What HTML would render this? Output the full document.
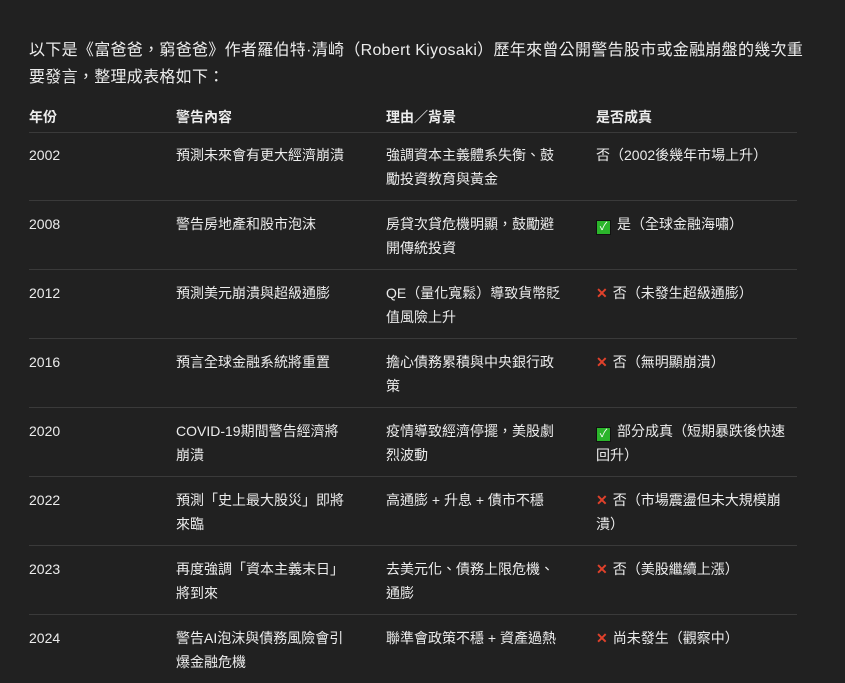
<!DOCTYPE html>
<html><head><meta charset="utf-8"><style>
body{margin:0;background:#212121;color:#ececec;font-family:"Liberation Sans","Noto Sans CJK TC",sans-serif;width:845px;height:681px;overflow:hidden;position:relative}
p{position:absolute;left:29px;top:37px;width:780px;margin:0;font-size:16px;line-height:27px;letter-spacing:0.3px}
.r{position:absolute;left:29px;width:768px;border-bottom:1px solid #3a3a3a;font-size:14px;line-height:24px}
.r div{position:absolute;top:11px}
.a{left:0}.b{left:147px;width:176px}.c{left:357px;width:177px}.d{left:567px;width:196px}
.h{font-weight:bold}
.ck{display:inline-block;width:13px;height:13px;background:#2bb52b;border:1px solid #111;color:#fff;font-size:11px;line-height:13px;text-align:center;vertical-align:-1px;margin-right:6px}
.x{color:#e0412b;font-weight:bold;margin-right:5px}
</style></head><body>
<p>以下是《富爸爸，窮爸爸》作者羅伯特·清崎（Robert Kiyosaki）歷年來曾公開警告股市或金融崩盤的幾次重要發言，整理成表格如下：</p>
<div class="r h" style="top:93px;height:39px"><div class="a" style="top:12px">年份</div><div class="b" style="top:12px">警告內容</div><div class="c" style="top:12px">理由／背景</div><div class="d" style="top:12px">是否成真</div></div>
<div class="r" style="top:132px;height:68px"><div class="a">2002</div><div class="b">預測未來會有更大經濟崩潰</div><div class="c">強調資本主義體系失衡、鼓勵投資教育與黃金</div><div class="d">否（2002後幾年市場上升）</div></div>
<div class="r" style="top:201px;height:68px"><div class="a">2008</div><div class="b">警告房地產和股市泡沫</div><div class="c">房貸次貸危機明顯，鼓勵避開傳統投資</div><div class="d"><span class="ck">✓</span>是（全球金融海嘯）</div></div>
<div class="r" style="top:270px;height:68px"><div class="a">2012</div><div class="b">預測美元崩潰與超級通膨</div><div class="c">QE（量化寬鬆）導致貨幣貶值風險上升</div><div class="d"><span class="x">✕</span>否（未發生超級通膨）</div></div>
<div class="r" style="top:339px;height:68px"><div class="a">2016</div><div class="b">預言全球金融系統將重置</div><div class="c">擔心債務累積與中央銀行政策</div><div class="d"><span class="x">✕</span>否（無明顯崩潰）</div></div>
<div class="r" style="top:408px;height:68px"><div class="a">2020</div><div class="b">COVID-19期間警告經濟將崩潰</div><div class="c">疫情導致經濟停擺，美股劇烈波動</div><div class="d"><span class="ck">✓</span>部分成真（短期暴跌後快速回升）</div></div>
<div class="r" style="top:477px;height:68px"><div class="a">2022</div><div class="b">預測「史上最大股災」即將來臨</div><div class="c">高通膨 + 升息 + 債市不穩</div><div class="d"><span class="x">✕</span>否（市場震盪但未大規模崩潰）</div></div>
<div class="r" style="top:546px;height:68px"><div class="a">2023</div><div class="b">再度強調「資本主義末日」將到來</div><div class="c">去美元化、債務上限危機、通膨</div><div class="d"><span class="x">✕</span>否（美股繼續上漲）</div></div>
<div class="r" style="top:615px;height:68px;border:0"><div class="a">2024</div><div class="b">警告AI泡沫與債務風險會引爆金融危機</div><div class="c">聯準會政策不穩 + 資產過熱</div><div class="d"><span class="x">✕</span>尚未發生（觀察中）</div></div>
</body></html>
